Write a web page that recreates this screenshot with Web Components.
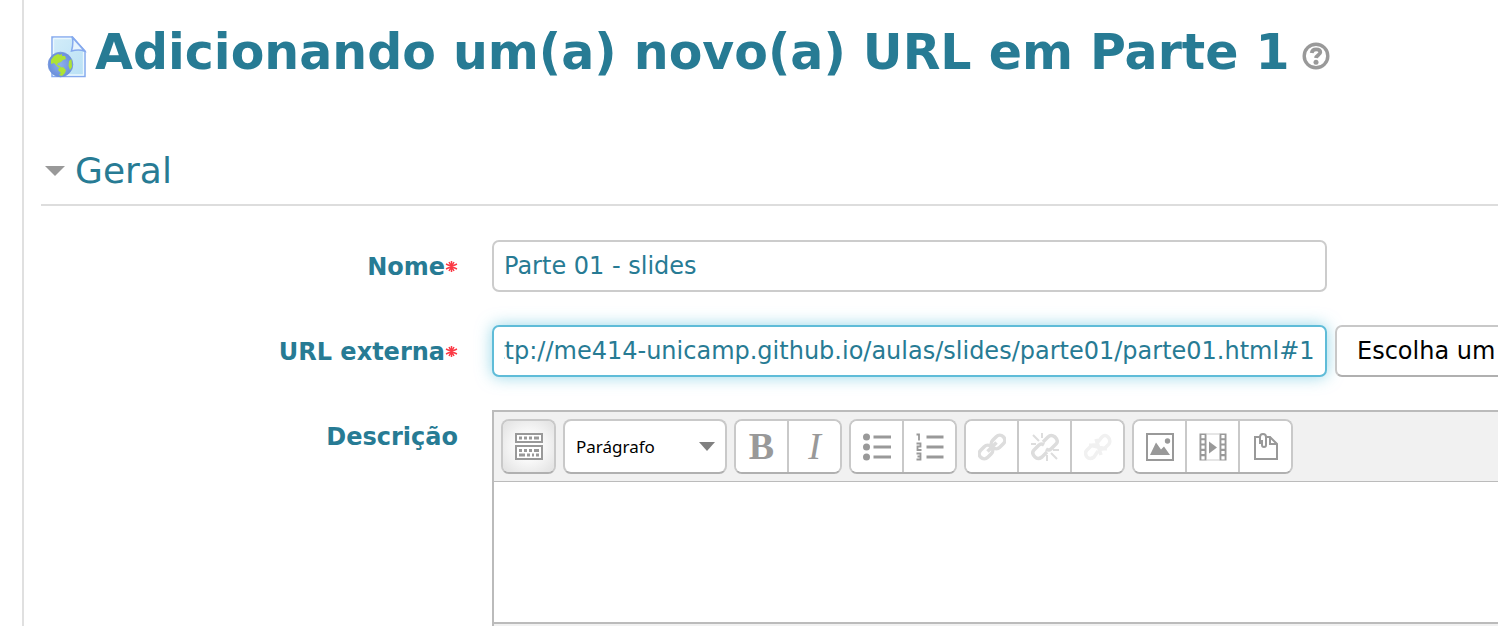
<!DOCTYPE html>
<html lang="pt-BR">
<head>
<meta charset="utf-8">
<title>Adicionando um(a) novo(a) URL em Parte 1</title>
<style>
  body { margin: 0; background: #fff; color: #277b94; overflow: hidden; font: 24px/36px "DejaVu Sans", Verdana, sans-serif; }
</style>
</head>
<body>
<page-panel>
  <page-heading>Adicionando um(a) novo(a) URL em Parte 1</page-heading>
  <form-section heading="Geral">
    <text-field label="Nome" value="Parte 01 - slides" required></text-field>
    <text-field label="URL externa" value="http://me414-unicamp.github.io/aulas/slides/parte01/parte01.html#1" required active>
      <picker-button>Escolha um</picker-button>
    </text-field>
    <editor-field label="Descrição"></editor-field>
  </form-section>
</page-panel>

<script>
const rowStyles = `
  :host { display: block; }
  * { box-sizing: border-box; }
  .row { display: grid; grid-template-columns: 417px minmax(0, 1fr); column-gap: 34px; }
  .label { padding-top: 9px; text-align: right; font-weight: bold; white-space: nowrap; }
  .label svg { width: 13px; height: 13px; vertical-align: 2px; }
`;
const star = `<svg viewBox="0 0 13 13" aria-label="obrigatório" role="img"><path d="M6.500 1v11M1 4l11 5M1 9l11-5M4 2l5 9M9 2l-5 9" stroke="#fb3a45" stroke-width="1.500" fill="none"/></svg>`;

function define(name, build, after) {
  customElements.define(name, class extends HTMLElement {
    connectedCallback() {
      if (this.shadowRoot) return;
      this.attachShadow({ mode: "open" }).innerHTML = build(this);
      if (after) after(this.shadowRoot, this);
    }
  });
}

define("page-panel", () => `
  <style>
    :host { display: block; margin-left: 22px; border-left: 2px solid #e0e0e0; padding: 23px 0 0 17px; min-height: 100vh; box-sizing: border-box; }
  </style>
  <slot></slot>`);

define("page-heading", () => `
  <style>
    :host { display: block; }
    .bar { display: flex; align-items: center; padding-left: 6px; }
    h2 { margin: 0 12px 0 8px; font-size: 49px; line-height: 60px; font-weight: bold; white-space: nowrap; }
    .file { width: 40px; height: 42px; flex: none; margin-top: 8px; }
    a { display: flex; margin-top: 6px; }
    a svg { width: 28px; height: 28px; }
  </style>
  <div class="bar">
    <svg class="file" viewBox="0 0 40 42" aria-hidden="true">
      <defs>
        <linearGradient id="paper" x1="0" y1="0" x2="1" y2="1"><stop offset="0" stop-color="#d3edf9"/><stop offset="1" stop-color="#b9e0f5"/></linearGradient>
        <radialGradient id="sea"><stop offset="0" stop-color="#8db0ec"/><stop offset="1" stop-color="#6c90db"/></radialGradient>
      </defs>
      <path d="M5 1h20.500l12.500 14v25.500H5z" fill="url(#paper)" stroke="#85a9ee" stroke-width="1.500"/>
      <path d="M6.500 2.500H24M6.500 2.500v36.500h30V16" fill="none" stroke="#eaf7fe" stroke-width="1.300"/>
      <path d="M25.500 1.500q1 7-1 13.500 7-2 13 0z" fill="#e7f4fd" stroke="#85a9ee" stroke-width="1.500"/>
      <circle cx="13.500" cy="28.500" r="12.300" fill="url(#sea)" stroke="#7093dc" stroke-width=".8"/>
      <path d="M4 24l3-4 4-2 2 1 2-1v2l3 0 1 3-3 1-2 2-3 1-1 2 3 1 1 2-3-1-4-4-3 1zM12 32l4-1 3 3-1 3-3 3-3-1 2-2-3-3zM24.500 23l.500 8-2 3-1.500-4 .5-5z" fill="#aee335"/>
    </svg>
    <h2><slot></slot></h2>
    <a href="#ajuda" aria-label="Ajuda">
      <svg viewBox="0 0 28 28"><circle cx="14" cy="14" r="11.800" fill="none" stroke="#999" stroke-width="3.400"/><path d="M9.700 11q.6-3.700 4.300-3.700c3 0 4.300 1.200 4.300 3 0 2.600-3.900 2.700-4.300 5.700" fill="none" stroke="#999" stroke-width="3.800"/><circle cx="14" cy="20.200" r="2.500" fill="#999"/></svg>
    </a>
  </div>`);

define("form-section", el => `
  <style>
    :host { display: block; margin-top: 61px; }
    fieldset { border: 0; margin: 0; padding: 0; min-width: 0; }
    legend { display: block; width: 100%; box-sizing: border-box; padding: 0 0 6px; border-bottom: 2px solid #ddd; font-size: 36px; line-height: 54px; }
    button { display: flex; align-items: center; gap: 10px; padding: 0 0 0 4px; border: 0; background: none; color: inherit; font: inherit; }
    button svg { width: 20px; height: 10px; }
    .rows { display: flex; flex-direction: column; gap: 33px; padding-top: 34px; }
  </style>
  <fieldset>
    <legend><button type="button" aria-expanded="true"><svg viewBox="0 0 20 10"><path d="M0 0h20L10 10z" fill="#999"/></svg>${el.getAttribute("heading")}</button></legend>
    <div class="rows"><slot></slot></div>
  </fieldset>`);

define("text-field", el => `
  <style>
    ${rowStyles}
    .controls { display: flex; gap: 8px; }
    input { width: 83%; flex: none; height: 52px; border: 2px solid #ccc; border-radius: 7px; padding: 0 10px; color: inherit; font: inherit; background: #fff; outline: 0; }
    :host([active]) input { border-color: #5fbcd8; box-shadow: 0 0 16px rgba(82, 188, 216, .6); }
  </style>
  <div class="row">
    <label class="label" for="field">${el.getAttribute("label")}${el.hasAttribute("required") ? star : ""}</label>
    <div class="controls"><input id="field" type="text" value="${el.getAttribute("value")}"><slot></slot></div>
  </div>`,
  root => { const i = root.querySelector("input"); i.scrollLeft = i.scrollWidth; });

define("picker-button", () => `
  <style>
    :host { display: block; flex: none; }
    button { box-sizing: border-box; width: 230px; height: 52px; padding: 0 20px; border: 2px solid #c8c8c8; border-bottom-color: #b0b0b0; border-radius: 7px; background: #fff; color: #000; font: inherit; text-align: left; }
  </style>
  <button type="button"><slot></slot></button>`);

const icons = {
  toggle: `<path d="M1 1h26v8H1zM1 13h26v13H1z" fill="#fff" stroke="#999" stroke-width="2"/><path d="M4 5h3M9 5h3M14 5h3M19 5h5M4 17.500h3M9 17.500h3M14 17.500h3M19 17.500h5M4 22h6M12 22h3M17 22h2M21 22h3" stroke="#999" stroke-width="3"/>`,
  bullets: `<g fill="#999"><circle cx="3.500" cy="4" r="3.500"/><circle cx="3.500" cy="14" r="3.500"/><circle cx="3.500" cy="24" r="3.500"/></g><path d="M10.500 4H28M10.500 14H28M10.500 24H28" stroke="#999" stroke-width="3"/>`,
  numbers: `<path d="M10.500 4H27.500M10.500 14H27.500M10.500 24H27.500" stroke="#999" stroke-width="3"/><path d="M.5 1.500h2.500v6M.5 10.500h4v3h-3v3.500h4M.5 20.500h4v6h-4M1.500 23.500h3" fill="none" stroke="#999" stroke-width="1.800"/>`,
  link: `<g fill="none" stroke="#ddd" stroke-width="3.500"><rect x="12.500" y="4" width="15" height="10" rx="5" transform="rotate(-45 20 9)"/><rect x=".5" y="14" width="15" height="10" rx="5" transform="rotate(-45 8 19)"/><path d="M9.500 18.500l9-9"/></g>`,
  unlink: `<g fill="none" stroke="#ddd" stroke-width="3.500"><path d="M12 9l5-5q3-3 7 0 4 4 1 7l-5 5q-2 2-5 0M16 19l-5 5q-4 3-7 0-4-4-1-7l5-5q2-2 5 0"/><path d="M2 2l6 6M11 0v5M0 11h5M22 17h6M16 22v6M20 20l6 6" stroke-width="2"/></g>`,
  nolink: `<g fill="none" stroke="#f1f1f1" stroke-width="3.500"><path d="M14 9l4-5q3-3 6 0t1 7l-4 4q-3 2-6 0M14 18l-4 6q-4 3-7 0-3-4 0-7l4-4q3-2 6 0M5 12l18 4M12 6l5 16"/></g>`,
  image: `<path d="M1 1h26v26H1z" fill="none" stroke="#999" stroke-width="2"/><path d="M4 22L10 9.500l5 7 3-3 6 8.500z" fill="#999"/><circle cx="21.500" cy="8" r="2.700" fill="#999"/>`,
  media: `<path d="M.5 .5h7v27h-7zM20.500 .5h7v27h-7z" fill="#999"/><path d="M7 1h14M7 27h14" stroke="#ccc"/><path d="M4 2v24.500M24 2v24.500" stroke="#fff" stroke-width="3.200" stroke-dasharray="3.200 2.100"/><path d="M10 8.500v12l8-6z" fill="#999"/>`,
  paste: `<path d="M8 4H3v22h22V11l-7-7h-5M18 4v7h7" fill="none" stroke="#999" stroke-width="2"/><path d="M8 11V4q0-3 3-3t3 3v8q0 2-2 2-2 0-2-2V7" fill="none" stroke="#999" stroke-width="2"/>`
};
const glyph = name => `<svg viewBox="0 0 28 28" aria-hidden="true">${icons[name]}</svg>`;

define("tool-group", () => `
  <style>
    :host { display: flex; border: 2px solid #c9c9c9; border-bottom-color: #b0b0b0; border-radius: 8px; overflow: hidden; background: #fff; }
  </style>
  <slot></slot>`);

define("tool-button", el => `
  <style>
    :host { display: block; }
    :host(:not(:first-child)) { border-left: 2px solid #c9c9c9; }
    button { display: flex; align-items: center; justify-content: center; width: 51px; height: 51px; padding: 0; border: 0; background: #fff; color: #999; font: 38px/51px "Liberation Serif", serif; }
    :host([pressed]) button { background: radial-gradient(circle, #fff 25%, #e0e0e0 100%); }
    svg { width: 28px; height: 28px; }
  </style>
  <button type="button" aria-label="${el.getAttribute("name")}">${el.hasAttribute("icon") ? glyph(el.getAttribute("icon")) : "<slot></slot>"}</button>`);

define("style-select", () => `
  <style>
    :host { display: grid; align-items: center; width: 164px; }
    select { grid-area: 1 / 1; box-sizing: border-box; width: 100%; height: 55px; appearance: none; margin: 0; padding: 0 11px; border: 2px solid #c9c9c9; border-bottom-color: #b0b0b0; border-radius: 8px; background: #fff; color: #000; font: 17px/24px "Noto Sans", sans-serif; }
    svg { grid-area: 1 / 1; justify-self: end; margin-right: 12px; width: 16px; height: 9px; pointer-events: none; }
  </style>
  <select aria-label="Estilo"><option>Parágrafo</option></select>
  <svg viewBox="0 0 16 9"><path d="M0 0h16L8 9z" fill="#808080"/></svg>`);

define("editor-field", el => `
  <style>
    ${rowStyles}
    .editor { border: 2px solid #bbb; border-right: 0; background: #f1f1f1; }
    .tools { display: flex; gap: 7px; padding: 7px; border-bottom: 1px solid #bbb; }
    .tools > * { flex: none; }
    textarea { display: block; width: 100%; height: 140px; padding: 10px; border: 0; resize: none; color: inherit; font: inherit; background: #fff; outline: 0; }
    .status { height: 32px; border-top: 2px solid #bbb; }
  </style>
  <div class="row">
    <label class="label" for="body">${el.getAttribute("label")}</label>
    <div class="editor">
      <div class="tools" role="toolbar">
        <tool-group><tool-button pressed name="Alternar barra" icon="toggle"></tool-button></tool-group>
        <style-select></style-select>
        <tool-group><tool-button name="Negrito"><b>B</b></tool-button><tool-button name="Itálico"><i>I</i></tool-button></tool-group>
        <tool-group><tool-button name="Lista" icon="bullets"></tool-button><tool-button name="Lista numerada" icon="numbers"></tool-button></tool-group>
        <tool-group><tool-button name="Inserir link" icon="link"></tool-button><tool-button name="Remover link" icon="unlink"></tool-button><tool-button name="Impedir link" icon="nolink"></tool-button></tool-group>
        <tool-group><tool-button name="Imagem" icon="image"></tool-button><tool-button name="Mídia" icon="media"></tool-button><tool-button name="Arquivos" icon="paste"></tool-button></tool-group>
      </div>
      <textarea id="body"></textarea>
      <div class="status"></div>
    </div>
  </div>`);
</script>
</body>
</html>
